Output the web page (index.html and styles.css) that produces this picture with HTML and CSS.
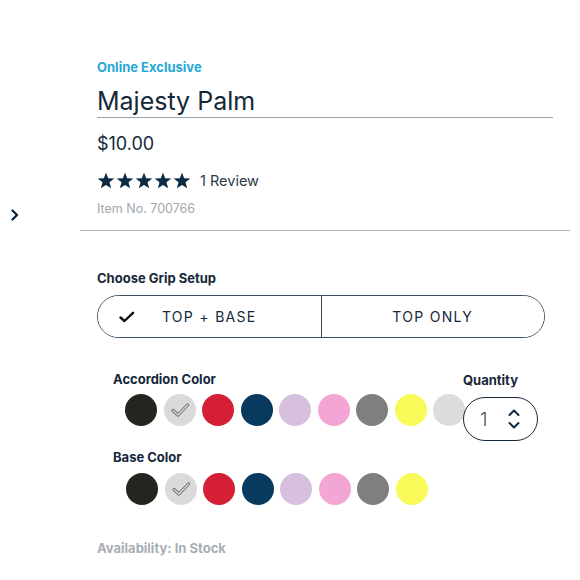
FILE: index.html
```html
<!DOCTYPE html>
<html lang="en">
<head>
<meta charset="utf-8">
<title>Majesty Palm</title>
<link rel="stylesheet" href="styles.css">
</head>
<body>
<div class="page">
  <div class="gallery-nav">
    <svg class="chev" width="10" height="12" viewBox="0 0 10 12"><path d="M2.5 1.5 L7 6 L2.5 10.5" fill="none" stroke="#0f2a44" stroke-width="2.4" stroke-linecap="round" stroke-linejoin="round"/></svg>
  </div>
  <div class="info">
    <div class="head">
      <div class="eyebrow">Online Exclusive</div>
      <h1 class="title">Majesty Palm</h1>
      <div class="price">$10.00</div>
      <div class="rating">
        <div class="stars">
          <svg viewBox="0 0 20 19" class="star"><polygon points="10,0.5 12.4,6.9 19.3,7.2 13.9,11.5 15.8,18.2 10,14.4 4.2,18.2 6.1,11.5 0.7,7.2 7.6,6.9"/></svg>
          <svg viewBox="0 0 20 19" class="star"><polygon points="10,0.5 12.4,6.9 19.3,7.2 13.9,11.5 15.8,18.2 10,14.4 4.2,18.2 6.1,11.5 0.7,7.2 7.6,6.9"/></svg>
          <svg viewBox="0 0 20 19" class="star"><polygon points="10,0.5 12.4,6.9 19.3,7.2 13.9,11.5 15.8,18.2 10,14.4 4.2,18.2 6.1,11.5 0.7,7.2 7.6,6.9"/></svg>
          <svg viewBox="0 0 20 19" class="star"><polygon points="10,0.5 12.4,6.9 19.3,7.2 13.9,11.5 15.8,18.2 10,14.4 4.2,18.2 6.1,11.5 0.7,7.2 7.6,6.9"/></svg>
          <svg viewBox="0 0 20 19" class="star"><polygon points="10,0.5 12.4,6.9 19.3,7.2 13.9,11.5 15.8,18.2 10,14.4 4.2,18.2 6.1,11.5 0.7,7.2 7.6,6.9"/></svg>
        </div>
        <span class="reviews">1 Review</span>
      </div>
      <div class="item-no">Item No. 700766</div>
    </div>

    <div class="options">
      <div class="label">Choose Grip Setup</div>
      <div class="grip">
        <button class="grip-opt selected">
          <svg class="grip-check" width="16" height="12" viewBox="0 0 16 12"><path d="M1.5 6.5 L5.5 10 L14 1.8" fill="none" stroke="#111" stroke-width="2.4" stroke-linecap="round" stroke-linejoin="round"/></svg>
          TOP + BASE
        </button>
        <button class="grip-opt">TOP ONLY</button>
      </div>

      <div class="color-area">
        <div class="color-groups">
          <div class="label">Accordion Color</div>
          <div class="swatches">
            <span class="sw" style="background:#23251f"></span>
            <span class="sw" style="background:#dadada"><svg viewBox="0 0 32 32" class="sw-check"><path d="M9 16.5 L14 21 L23.5 11" fill="none" stroke="#6a6a6a" stroke-width="3.2" stroke-linecap="round" stroke-linejoin="round"/><path d="M9 16.5 L14 21 L23.5 11" fill="none" stroke="#dadada" stroke-width="1.4" stroke-linecap="round" stroke-linejoin="round"/></svg></span>
            <span class="sw" style="background:#d41f35"></span>
            <span class="sw" style="background:#083a60"></span>
            <span class="sw" style="background:#d7c0dd"></span>
            <span class="sw" style="background:#f3a5d4"></span>
            <span class="sw" style="background:#7f7f7f"></span>
            <span class="sw" style="background:#f7fa58"></span>
            <span class="sw" style="background:#dcdcdc"></span>
          </div>
          <div class="label base-label">Base Color</div>
          <div class="swatches second">
            <span class="sw" style="background:#23251f"></span>
            <span class="sw" style="background:#dadada"><svg viewBox="0 0 32 32" class="sw-check"><path d="M9 16.5 L14 21 L23.5 11" fill="none" stroke="#6a6a6a" stroke-width="3.2" stroke-linecap="round" stroke-linejoin="round"/><path d="M9 16.5 L14 21 L23.5 11" fill="none" stroke="#dadada" stroke-width="1.4" stroke-linecap="round" stroke-linejoin="round"/></svg></span>
            <span class="sw" style="background:#d41f35"></span>
            <span class="sw" style="background:#083a60"></span>
            <span class="sw" style="background:#d7c0dd"></span>
            <span class="sw" style="background:#f3a5d4"></span>
            <span class="sw" style="background:#7f7f7f"></span>
            <span class="sw" style="background:#f7fa58"></span>
          </div>
        </div>
        <div class="qty">
          <div class="label">Quantity</div>
          <div class="qty-box">
            <span class="qty-val">1</span>
            <span class="qty-arrows">
              <svg width="12" height="22" viewBox="0 0 12 22"><path d="M1.5 7 L6 2.5 L10.5 7" fill="none" stroke="#0f2a44" stroke-width="2" stroke-linecap="round" stroke-linejoin="round"/><path d="M1.5 15 L6 19.5 L10.5 15" fill="none" stroke="#0f2a44" stroke-width="2" stroke-linecap="round" stroke-linejoin="round"/></svg>
            </span>
          </div>
        </div>
      </div>

      <div class="availability">Availability: In Stock</div>
    </div>
  </div>
</div>
</body>
</html>
```

FILE: styles.css
```css
* { box-sizing: border-box; }
html, body { margin: 0; padding: 0; background: #fff; }
body {
  font-family: Inter, "Open Sans", "Liberation Sans", sans-serif;
  color: #15283a;
}
.page {
  display: flex;
  width: 580px;
}
.gallery-nav {
  width: 80px;
  flex: none;
  padding-top: 209px;
  padding-left: 10px;
}
.chev { display: block; }
.info {
  width: 490px;
  flex: none;
}
.head {
  padding: 59px 17px 13px 17px;
  border-bottom: 1px solid #b3b8bd;
}
.eyebrow {
  font-size: 13px;
  line-height: 16px;
  font-weight: 700;
  color: #27a8d5;
}
.title {
  margin: 10px 0 0 0;
  font-size: 25px;
  line-height: 32px;
  font-weight: 400;
  color: #15283a;
  padding-bottom: 0;
  border-bottom: 1px solid #98a1aa;
}
.price {
  margin-top: 14px;
  font-size: 18px;
  line-height: 24px;
  color: #15283a;
}
.rating {
  margin-top: 14px;
  display: flex;
  align-items: center;
  height: 20px;
}
.stars { display: flex; gap: 1px; }
.star { width: 18px; height: 17px; fill: #0c2c46; display: block; }
.reviews {
  margin-left: 9px;
  font-size: 14.5px;
  color: #2a3a4a;
}
.item-no {
  margin-top: 11px;
  font-size: 12.5px;
  line-height: 16px;
  color: #a2a7ac;
}
.options {
  padding: 39px 25px 0 17px;
}
.label {
  font-size: 13px;
  line-height: 16px;
  font-weight: 700;
  color: #15283a;
}
.grip {
  margin-top: 9px;
  display: flex;
  height: 43px;
  border: 1.5px solid #3c4e5e;
  border-radius: 22px;
  overflow: hidden;
}
.grip-opt {
  flex: 1;
  position: relative;
  background: #fff;
  border: none;
  font-family: inherit;
  font-size: 14px;
  letter-spacing: 1.3px;
  color: #15283a;
  padding: 0;
}
.grip-opt + .grip-opt { border-left: 1.5px solid #3c4e5e; }
.grip-check {
  position: absolute;
  left: 21px;
  top: 15px;
}
.color-area {
  margin-top: 33px;
  display: flex;
}
.color-groups {
  width: 366px;
  flex: none;
  padding-left: 16px;
}
.swatches {
  margin-top: 7px;
  padding-left: 12px;
  display: flex;
  gap: 6.5px;
}
.swatches.second { margin-top: 8px; padding-left: 13px; }
.sw {
  width: 32px;
  height: 32px;
  border-radius: 50%;
  flex: none;
  display: block;
}
.sw-check { width: 32px; height: 32px; display: block; }
.base-label { margin-top: 23px; }
.qty {
  padding-top: 1px;
}
.qty-box {
  margin-top: 9px;
  width: 75px;
  height: 44px;
  border: 1.5px solid #15283a;
  border-radius: 22px;
  display: flex;
  align-items: center;
  padding-left: 16px;
}
.qty-val {
  font-size: 19px;
  font-weight: 300;
  color: #44505b;
  width: 28px;
}
.qty-arrows svg { display: block; }
.availability {
  margin-top: 35px;
  font-size: 13px;
  line-height: 16px;
  font-weight: 700;
  color: #a8aeb4;
}
```
